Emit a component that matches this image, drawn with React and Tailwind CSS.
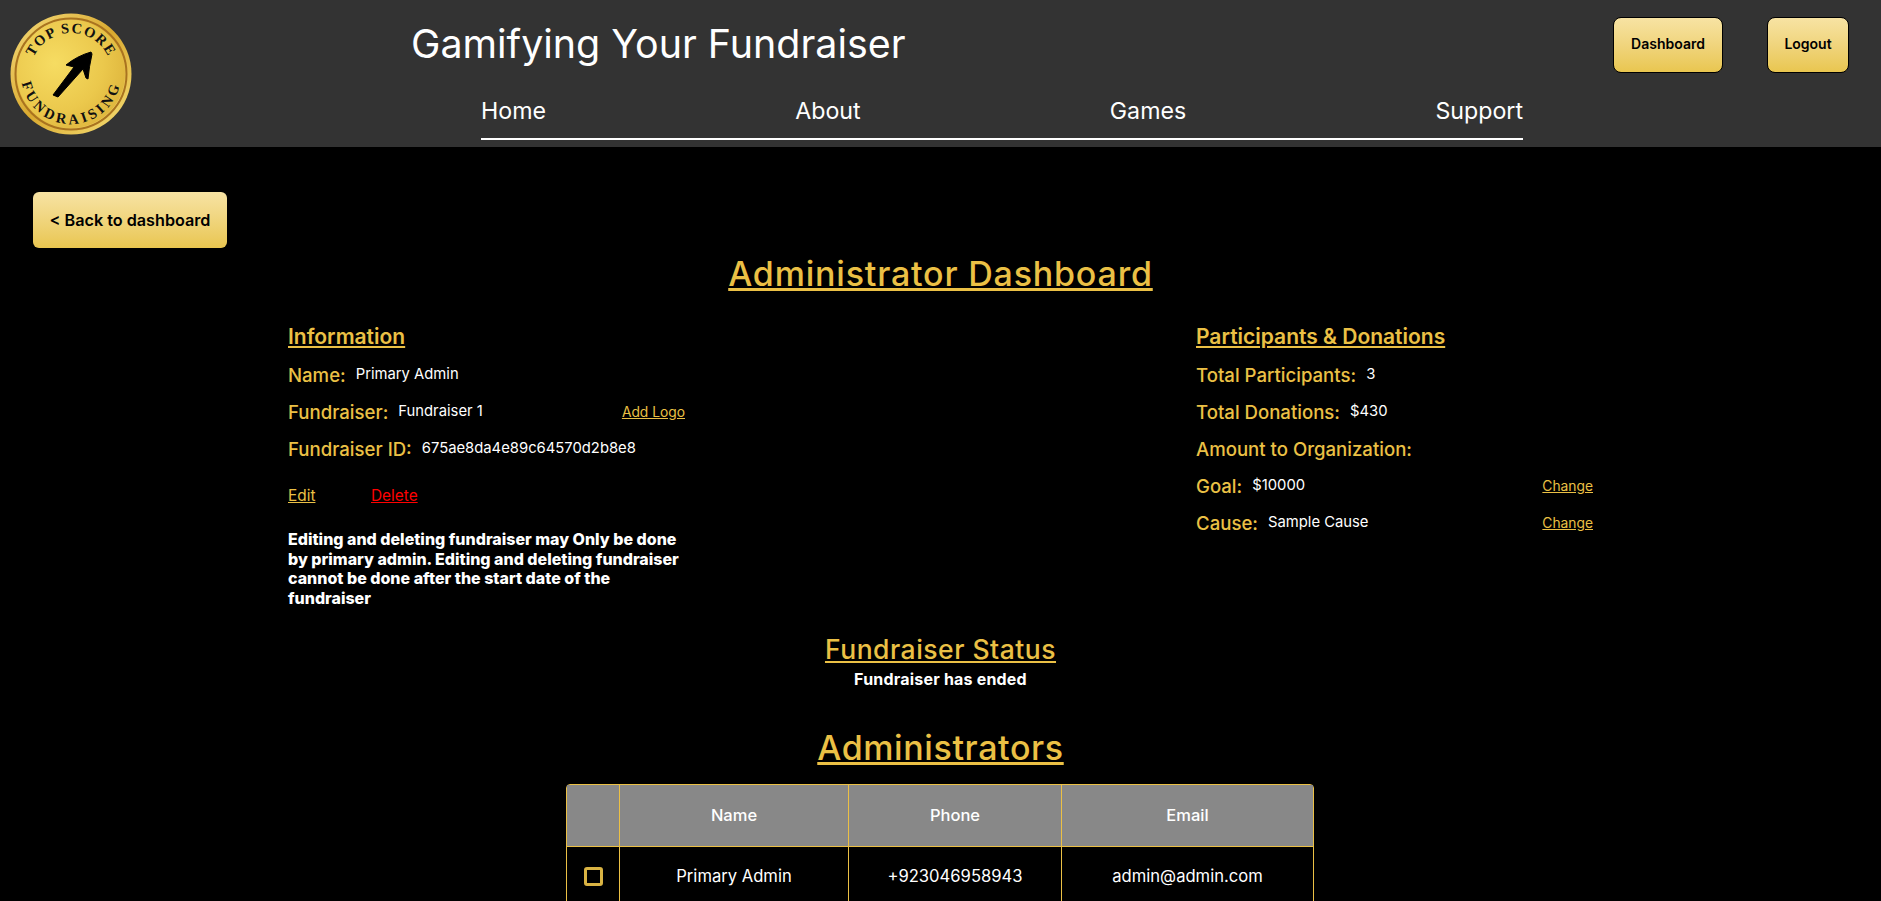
import React from "react";

const navLinks = ["Home", "About", "Games", "Support"];

const Logo = () => (
  <svg width="124" height="124" viewBox="0 0 124 124" className="shrink-0">
    <defs>
      <radialGradient id="coin" cx="35%" cy="40%" r="75%">
        <stop offset="0%" stopColor="#f6dc62" />
        <stop offset="60%" stopColor="#ebc84c" />
        <stop offset="100%" stopColor="#dcb23a" />
      </radialGradient>
      <linearGradient id="rim" x1="0" y1="0" x2="1" y2="1">
        <stop offset="0%" stopColor="#f5dc7c" />
        <stop offset="50%" stopColor="#d9a92f" />
        <stop offset="100%" stopColor="#f8e27a" />
      </linearGradient>
      <path id="topArc" d="M 21 62 A 41 41 0 0 1 103 62" />
      <path id="bottomArc" d="M 12 62 A 50 50 0 0 0 112 62" />
    </defs>
    <circle cx="62" cy="62" r="60.5" fill="url(#rim)" />
    <circle cx="62" cy="62" r="55.5" fill="none" stroke="#a9731f" strokeWidth="2" />
    <circle cx="62" cy="62" r="54" fill="url(#coin)" />
    <text fontFamily="'Liberation Serif', serif" fontWeight="700" fontSize="14.5" letterSpacing="1.3" fill="#111">
      <textPath href="#topArc" startOffset="50%" textAnchor="middle">TOP SCORE</textPath>
    </text>
    <text fontFamily="'Liberation Serif', serif" fontWeight="700" fontSize="14.5" letterSpacing="3.3" fill="#111">
      <textPath href="#bottomArc" startOffset="50%" textAnchor="middle">FUNDRAISING</textPath>
    </text>
    <path d="M44 83 L65 55 L57 53 Q68 44 82 40 L83 42 Q80 55 79 67 L77 66 L74 57 L49 85 Z" fill="#000" stroke="#000" strokeWidth="1" strokeLinejoin="round" />
  </svg>
);

const GoldButton = ({ children, className }) => (
  <button className={"bg-gradient-to-b from-[#f7e3a3] to-[#e9c64f] text-black font-semibold " + className}>
    {children}
  </button>
);

const Row = ({ label, value, action }) => (
  <div className="flex items-center h-[37px]">
    <span className="text-[18.6px] font-medium text-[#ebc045]">{label}</span>
    {value && <span className="ml-[10px] text-[14.8px] text-white -mt-0.5">{value}</span>}
    {action && <a className="ml-auto text-[13.8px] text-[#ebc045] underline">{action}</a>}
  </div>
);

const App = () => {
  return (
    <div className="h-screen overflow-hidden bg-black font-['Inter','Liberation_Sans',sans-serif]">
      <header className="flex h-[147px] bg-[#333333]">
        <div className="pl-[9px] pt-[12px] w-[411px] shrink-0">
          <Logo />
        </div>
        <div className="w-[1112px] shrink-0">
          <h2 className="text-[39.4px] leading-[48px] mt-[20px] text-white">Gamifying Your Fundraiser</h2>
          <nav className="ml-[70px] mt-[24px] flex justify-between border-b-2 border-white h-[48px] pt-[3px] text-[23.2px] leading-[33px] text-white">
            {navLinks.map((link) => (
              <a key={link}>{link}</a>
            ))}
          </nav>
        </div>
        <div className="ml-[90px] pt-[17px] flex items-start">
          <GoldButton className="w-[110px] h-[56px] rounded-lg border border-black pb-[3px] text-[14px]">Dashboard</GoldButton>
          <GoldButton className="ml-[44px] w-[82px] h-[56px] rounded-lg border border-black pb-[3px] text-[14px]">Logout</GoldButton>
        </div>
      </header>

      <main>
        <GoldButton className="ml-[33px] mt-[45px] w-[194px] h-[56px] rounded-md text-[16.2px] block">&lt; Back to dashboard</GoldButton>

        <h1 className="text-center text-[34px] tracking-[0.8px] leading-[48px] font-medium text-[#ebc045] underline mt-[2px]">Administrator Dashboard</h1>

        <div className="mx-[288px] mt-[24px] flex justify-between">
          <section className="w-[397px]">
            <h3 className="text-[21px] leading-[30px] font-semibold text-[#ebc045] underline mb-[5px]">Information</h3>
            <Row label="Name:" value="Primary Admin" />
            <Row label="Fundraiser:" value="Fundraiser 1" action="Add Logo" />
            <Row label="Fundraiser ID:" value="675ae8da4e89c64570d2b8e8" />
            <div className="flex mt-[17px] text-[15.4px] leading-[22px] underline">
              <a className="text-[#ebc045] w-[83px]">Edit</a>
              <a className="text-[#ff0000]">Delete</a>
            </div>
            <p className="mt-[23px] text-[16px] leading-[19.7px] font-extrabold text-white">
              Editing and deleting fundraiser may Only be done by primary admin. Editing and deleting fundraiser cannot be done after the start date of the fundraiser
            </p>
          </section>
          <section className="w-[397px]">
            <h3 className="text-[21px] leading-[30px] font-semibold text-[#ebc045] underline mb-[5px]">Participants &amp; Donations</h3>
            <Row label="Total Participants:" value="3" />
            <Row label="Total Donations:" value="$430" />
            <Row label="Amount to Organization:" />
            <Row label="Goal:" value="$10000" action="Change" />
            <Row label="Cause:" value="Sample Cause" action="Change" />
          </section>
        </div>

        <h2 className="mt-[21px] text-center text-[26.5px] tracking-[0.5px] leading-[38px] font-medium text-[#ebc045] underline">Fundraiser Status</h2>
        <p className="mt-px text-center text-[16px] tracking-[0.2px] leading-[20px] font-bold text-white">Fundraiser has ended</p>

        <h2 className="mt-[35px] text-center text-[34px] tracking-[0.6px] leading-[48px] font-medium text-[#ebc045] underline">Administrators</h2>

        <div className="ml-[566px] mt-[12px] w-[748px] rounded-t border border-[#ebc045]">
          <div className="flex h-[62px] items-center bg-[#888888] text-[16.5px] font-medium text-white text-center border-b border-[#ebc045]">
            <div className="w-[53px] h-full border-r border-[#ebc045]" />
            <div className="w-[229px] h-full border-r border-[#ebc045] flex items-center justify-center">Name</div>
            <div className="w-[213px] h-full border-r border-[#ebc045] flex items-center justify-center">Phone</div>
            <div className="flex-1 h-full flex items-center justify-center">Email</div>
          </div>
          <div className="flex h-[60px] items-center text-[16.6px] text-white text-center">
            <div className="w-[53px] h-full border-r border-[#ebc045] flex items-center justify-center">
              <span className="block w-[19px] h-[19px] rounded-[3px] border-[3px] border-[#d9b343]" />
            </div>
            <div className="w-[229px] h-full border-r border-[#ebc045] flex items-center justify-center">Primary Admin</div>
            <div className="w-[213px] h-full border-r border-[#ebc045] flex items-center justify-center">+923046958943</div>
            <div className="flex-1 h-full flex items-center justify-center">admin@admin.com</div>
          </div>
        </div>
      </main>
    </div>
  );
};

export default App;
